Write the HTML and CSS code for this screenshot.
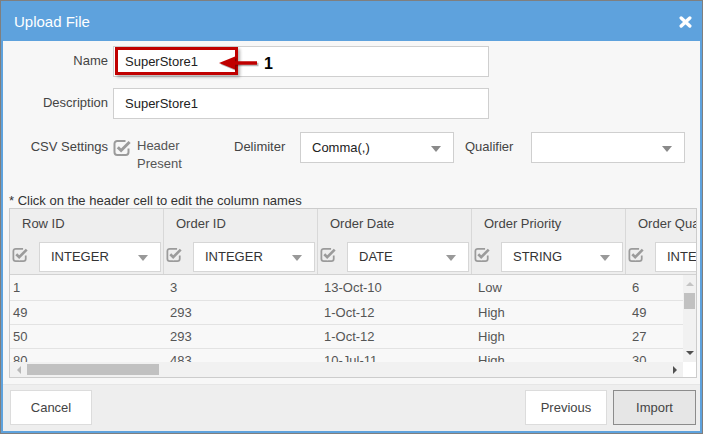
FILE: index.html
```html
<!DOCTYPE html>
<html>
<head>
<meta charset="utf-8">
<link rel="stylesheet" href="styles.css">
</head>
<body>
<div class="dialog">
  <div class="titlebar">
    <span class="title">Upload File</span>
    <svg class="close" width="13" height="12" viewBox="0 0 13 12"><path d="M2.2 2L10.8 10M10.8 2L2.2 10" stroke="#fff" stroke-width="3.4" stroke-linecap="round"/></svg>
  </div>
  <div class="content">
    <div class="form-row r1">
      <label class="lbl">Name</label>
      <div class="field wide">SuperStore1</div>
    </div>
    <div class="form-row r2">
      <label class="lbl">Description</label>
      <div class="field wide">SuperStore1</div>
    </div>
    <div class="form-row r3">
      <label class="lbl">CSV Settings</label>
      <div class="check-group">
        <svg class="chk big" width="18" height="17" viewBox="0 0 18 17"><path d="M12.5 2H4.2A2.7 2.7 0 0 0 1.5 4.7v8.6A2.7 2.7 0 0 0 4.2 16h8.6a2.7 2.7 0 0 0 2.7-2.7V9.5" stroke="#9b9b9b" stroke-width="2" fill="none"/><path d="M4.8 8.2l3.3 3.3L16.6 3" stroke="#f7f7f7" stroke-width="5.2" fill="none"/><path d="M4.8 8.2l3.3 3.3L16.6 3" stroke="#9b9b9b" stroke-width="3" fill="none"/></svg>
        <span class="check-text">Header<br>Present</span>
      </div>
      <label class="lbl2">Delimiter</label>
      <div class="field select">Comma(,)<span class="caret"></span></div>
      <label class="lbl2">Qualifier</label>
      <div class="field select"><span class="caret"></span></div>
    </div>
    <p class="note">* Click on the header cell to edit the column names</p>
    <div class="grid">
      <div class="grid-head">
        <div class="hcell"><div class="htitle">Row ID</div><div class="hrow"><svg class="chk" width="16" height="15" viewBox="0 0 18 17"><path d="M12.5 2H4.2A2.7 2.7 0 0 0 1.5 4.7v8.6A2.7 2.7 0 0 0 4.2 16h8.6a2.7 2.7 0 0 0 2.7-2.7V9.5" stroke="#9b9b9b" stroke-width="2" fill="none"/><path d="M4.8 8.2l3.3 3.3L16.6 3" stroke="#eeeeee" stroke-width="5.2" fill="none"/><path d="M4.8 8.2l3.3 3.3L16.6 3" stroke="#9b9b9b" stroke-width="3" fill="none"/></svg><div class="hselect">INTEGER<span class="caret"></span></div></div></div>
        <div class="hcell"><div class="htitle">Order ID</div><div class="hrow"><svg class="chk" width="16" height="15" viewBox="0 0 18 17"><path d="M12.5 2H4.2A2.7 2.7 0 0 0 1.5 4.7v8.6A2.7 2.7 0 0 0 4.2 16h8.6a2.7 2.7 0 0 0 2.7-2.7V9.5" stroke="#9b9b9b" stroke-width="2" fill="none"/><path d="M4.8 8.2l3.3 3.3L16.6 3" stroke="#eeeeee" stroke-width="5.2" fill="none"/><path d="M4.8 8.2l3.3 3.3L16.6 3" stroke="#9b9b9b" stroke-width="3" fill="none"/></svg><div class="hselect">INTEGER<span class="caret"></span></div></div></div>
        <div class="hcell"><div class="htitle">Order Date</div><div class="hrow"><svg class="chk" width="16" height="15" viewBox="0 0 18 17"><path d="M12.5 2H4.2A2.7 2.7 0 0 0 1.5 4.7v8.6A2.7 2.7 0 0 0 4.2 16h8.6a2.7 2.7 0 0 0 2.7-2.7V9.5" stroke="#9b9b9b" stroke-width="2" fill="none"/><path d="M4.8 8.2l3.3 3.3L16.6 3" stroke="#eeeeee" stroke-width="5.2" fill="none"/><path d="M4.8 8.2l3.3 3.3L16.6 3" stroke="#9b9b9b" stroke-width="3" fill="none"/></svg><div class="hselect">DATE<span class="caret"></span></div></div></div>
        <div class="hcell"><div class="htitle">Order Priority</div><div class="hrow"><svg class="chk" width="16" height="15" viewBox="0 0 18 17"><path d="M12.5 2H4.2A2.7 2.7 0 0 0 1.5 4.7v8.6A2.7 2.7 0 0 0 4.2 16h8.6a2.7 2.7 0 0 0 2.7-2.7V9.5" stroke="#9b9b9b" stroke-width="2" fill="none"/><path d="M4.8 8.2l3.3 3.3L16.6 3" stroke="#eeeeee" stroke-width="5.2" fill="none"/><path d="M4.8 8.2l3.3 3.3L16.6 3" stroke="#9b9b9b" stroke-width="3" fill="none"/></svg><div class="hselect">STRING<span class="caret"></span></div></div></div>
        <div class="hcell"><div class="htitle">Order Quantity</div><div class="hrow"><svg class="chk" width="16" height="15" viewBox="0 0 18 17"><path d="M12.5 2H4.2A2.7 2.7 0 0 0 1.5 4.7v8.6A2.7 2.7 0 0 0 4.2 16h8.6a2.7 2.7 0 0 0 2.7-2.7V9.5" stroke="#9b9b9b" stroke-width="2" fill="none"/><path d="M4.8 8.2l3.3 3.3L16.6 3" stroke="#eeeeee" stroke-width="5.2" fill="none"/><path d="M4.8 8.2l3.3 3.3L16.6 3" stroke="#9b9b9b" stroke-width="3" fill="none"/></svg><div class="hselect">INTEGER<span class="caret"></span></div></div></div>
      </div>
      <div class="grid-mid">
        <div class="rows">
          <div class="row"><div class="cell">1</div><div class="cell">3</div><div class="cell">13-Oct-10</div><div class="cell">Low</div><div class="cell">6</div></div>
          <div class="row"><div class="cell">49</div><div class="cell">293</div><div class="cell">1-Oct-12</div><div class="cell">High</div><div class="cell">49</div></div>
          <div class="row"><div class="cell">50</div><div class="cell">293</div><div class="cell">1-Oct-12</div><div class="cell">High</div><div class="cell">27</div></div>
          <div class="row"><div class="cell">80</div><div class="cell">483</div><div class="cell">10-Jul-11</div><div class="cell">High</div><div class="cell">30</div></div>
        </div>
        <div class="vscroll">
          <div class="vbtn"><span class="tri-up"></span></div>
          <div class="vthumb"></div>
          <div class="vspace"></div>
          <div class="vbtn down"><span class="tri-down"></span></div>
        </div>
      </div>
      <div class="grid-bottom">
        <div class="hscroll">
          <div class="hbtn"><span class="tri-left"></span></div>
          <div class="hthumb"></div>
          <div class="hspace"></div>
          <div class="hbtn"><span class="tri-right"></span></div>
        </div>
        <div class="corner"></div>
      </div>
    </div>
  </div>
  <div class="footer">
    <button class="btn">Cancel</button>
    <div class="btn-group">
      <button class="btn">Previous</button>
      <button class="btn primary">Import</button>
    </div>
  </div>
  <div class="annot-box"></div>
  <svg class="annot-arrow" width="52" height="20" viewBox="0 0 52 20"><g transform="translate(1.5,1.5)" opacity="0.28"><path d="M4 8L20 1.5V6.2H42V9.8H20V14.5Z" fill="#000"/></g><path d="M4 8L20 1.5V6.2H42V9.8H20V14.5Z" fill="#c00000"/></svg>
  <span class="annot-num">1</span>
</div>
</body>
</html>
```

FILE: styles.css
```css
* { box-sizing: border-box; }
html, body { margin: 0; padding: 0; background: #ffffff; }
body { font-family: "Liberation Sans", Arial, sans-serif; font-size: 13px; color: #444; }

.dialog {
  position: relative;
  width: 703px;
  height: 434px;
  border: 1px solid #7f7f7f;
  background: #5ea2dd;
  display: flex;
  flex-direction: column;
}

.titlebar {
  height: 40px;
  flex: 0 0 40px;
  display: flex;
  align-items: center;
  justify-content: space-between;
  padding: 1px 10px 0 13px;
}
.title { color: #fff; font-size: 15px; }
.close { display: block; margin-top: 1px; }

.content {
  margin: 0 2px;
  height: 343px;
  flex: 0 0 343px;
  background: #f7f7f7;
  padding: 5px 3px 0 6px;
}

.form-row { display: flex; align-items: flex-start; }
.r1 { margin-bottom: 11px; }
.r2 { margin-bottom: 13px; }

.lbl {
  width: 99px;
  margin-right: 5px;
  text-align: right;
  padding-top: 7px;
  line-height: 15px;
  color: #444;
}
.lbl2 {
  width: 66px;
  padding-top: 7px;
  line-height: 15px;
  color: #444;
}

.field {
  position: relative;
  height: 31px;
  border: 1px solid #cfcfcf;
  background: #fff;
  padding-left: 11px;
  line-height: 29px;
  color: #222;
}
.wide { width: 376px; }
.select { width: 154px; margin-right: 11px; }

.caret {
  position: absolute;
  right: 12px;
  top: 13px;
  width: 0;
  height: 0;
  border-left: 5px solid transparent;
  border-right: 5px solid transparent;
  border-top: 6px solid #8a8a8a;
}

.check-group {
  width: 121px;
  display: flex;
  align-items: flex-start;
}
.chk { display: block; flex: 0 0 auto; }
.chk.big { margin-top: 7px; }
.check-text {
  margin-left: 6px;
  padding-top: 5px;
  line-height: 18px;
  color: #555;
}

.note {
  margin: 20px 0 0 0;
  line-height: 15px;
  color: #333;
}

.grid {
  border: 1px solid #cccccc;
  background: #f8f8f8;
}
.grid-head {
  display: flex;
  overflow: hidden;
  background: #eeeeee;
  border-bottom: 1px solid #d2d2d2;
  height: 66px;
}
.hcell {
  flex: 0 0 154px;
  border-right: 1px solid #d8d8d8;
}
.htitle {
  height: 33px;
  line-height: 29px;
  padding-left: 12px;
  color: #444;
}
.hrow {
  display: flex;
  align-items: flex-start;
  height: 30px;
}
.hrow .chk { margin: 5px 0 0 2px; }
.hselect {
  position: relative;
  width: 122px;
  height: 30px;
  margin-left: 11px;
  background: #fff;
  border: 1px solid #d6d6d6;
  padding-left: 11px;
  line-height: 28px;
  color: #333;
}
.hselect .caret { top: 12px; right: 12px; border-top-color: #999; }

.grid-mid {
  display: flex;
  height: 87px;
}
.rows {
  flex: 1 1 auto;
  overflow: hidden;
}
.row {
  display: flex;
  height: 24px;
  border-bottom: 1px solid #e3e3e3;
  line-height: 23px;
  color: #555;
}
.row:first-child { height: 26px; line-height: 25px; }
.cell {
  flex: 0 0 154px;
  padding-left: 6px;
  white-space: nowrap;
}
.cell:first-child { padding-left: 3px; }

.vscroll {
  flex: 0 0 13px;
  background: #f1f1f1;
  display: flex;
  flex-direction: column;
  align-items: center;
}
.vbtn {
  height: 18px;
  width: 13px;
  display: flex;
  align-items: center;
  justify-content: center;
}
.vthumb { width: 11px; height: 16px; background: #c1c1c1; }
.vspace { flex: 1 1 auto; }
.tri-up {
  border-left: 4px solid transparent;
  border-right: 4px solid transparent;
  border-bottom: 4px solid #c4c4c4;
}
.tri-down {
  border-left: 4px solid transparent;
  border-right: 4px solid transparent;
  border-top: 4px solid #505050;
}

.grid-bottom {
  display: flex;
  height: 15px;
}
.hscroll {
  flex: 1 1 auto;
  display: flex;
  align-items: center;
  background: #f1f1f1;
}
.hbtn {
  width: 17px;
  height: 15px;
  display: flex;
  align-items: center;
  justify-content: center;
}
.hthumb { width: 132px; height: 11px; background: #c1c1c1; }
.hspace { flex: 1 1 auto; }
.tri-left {
  border-top: 4px solid transparent;
  border-bottom: 4px solid transparent;
  border-right: 4px solid #b8b8b8;
}
.tri-right {
  border-top: 4px solid transparent;
  border-bottom: 4px solid transparent;
  border-left: 4px solid #505050;
}
.corner { flex: 0 0 13px; background: #ffffff; }

.footer {
  margin: 0 2px;
  height: 47px;
  flex: 0 0 47px;
  background: #eeeeee;
  border-top: 1px solid #e6e6e6;
  padding: 5px 4px 0 7px;
  display: flex;
  justify-content: space-between;
  align-items: flex-start;
}
.btn-group { display: flex; gap: 6px; }
.btn {
  height: 35px;
  width: 82px;
  background: #ffffff;
  border: 1px solid #dcdcdc;
  font-family: "Liberation Sans", Arial, sans-serif;
  font-size: 13px;
  color: #444;
  padding: 0;
}
.btn.primary {
  width: 83px;
  background: #e6e6e6;
  border: 1px solid #8c8c8c;
}

.annot-box {
  position: absolute;
  left: 114px;
  top: 46px;
  width: 123px;
  height: 28px;
  border: 3px solid #c00000;
  box-shadow: 2px 2px 3px rgba(0, 0, 0, 0.3);
}
.annot-arrow {
  position: absolute;
  left: 214px;
  top: 54px;
}
.annot-num {
  position: absolute;
  left: 263px;
  top: 54px;
  font-size: 16px;
  font-weight: bold;
  line-height: 18px;
  color: #000;
}
```
